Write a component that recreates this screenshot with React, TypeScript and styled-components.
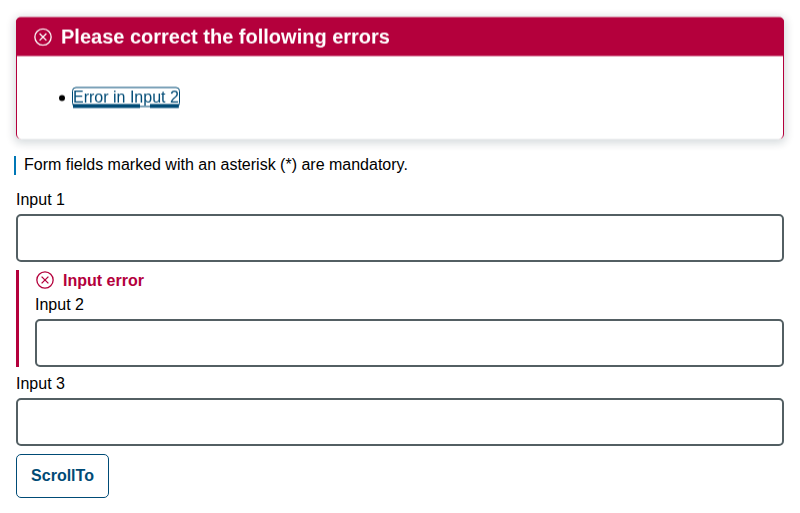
import React from 'react';
import styled, { createGlobalStyle, keyframes } from 'styled-components';

const GlobalStyle = createGlobalStyle`
  * { box-sizing: border-box; }
  body {
    margin: 0;
    background: #fff;
    color: #000;
    font: 16px/18px "Liberation Sans", Arial, sans-serif;
  }
`;

const Page = styled.main`
  display: flex;
  flex-direction: column;
  align-items: stretch;
  padding: 16px;
`;

const settle = keyframes`
  from { transform: translateY(0.45px); }
  to { transform: translateY(0.46px); }
`;

const Alert = styled.section`
  height: 122px;
  margin: 1px 0 -1px;
  border: 1px solid #b4003c;
  border-top: 0;
  border-bottom: 0;
  border-radius: 5px;
  background: #fff;
  box-shadow: 0 2px 8px 2px rgba(8, 35, 48, 0.16);
  will-change: transform;
  animation: ${settle} 10s linear infinite alternate;
`;

const AlertHeader = styled.header`
  display: flex;
  align-items: center;
  gap: 9px;
  height: 39px;
  margin: 0 -1px;
  padding: 1px 18px 0;
  border-radius: 5px 5px 0 0;
  background: #b4003c;
  color: #fff;
`;

const AlertTitle = styled.h2`
  margin: 0;
  font-size: 20px;
  line-height: 24px;
`;

const ErrorList = styled.ul`
  margin: 32px 0 0;
  padding: 0 0 0 42px;
  list-style: none;
`;

const ErrorItem = styled.li`
  display: flex;
  align-items: flex-start;
  gap: 8px;

  &::before {
    content: '';
    width: 6px;
    height: 6px;
    margin-top: 7px;
    border-radius: 50%;
    background: #000;
  }
`;

const ErrorLink = styled.a`
  height: 18px;
  padding-top: 1px;
  border-radius: 3px;
  outline: 1px solid #004b76;
  color: #004b76;
  text-decoration: underline;
  text-decoration-thickness: 4px;
  text-underline-offset: 1px;
`;

const MandatoryNote = styled.p`
  margin: 18px 0 0 -2px;
  padding: 0 0 1px 8px;
  border-left: 2px solid #0077b6;
`;

const Field = styled.div<{ $invalid?: boolean; $gap: number }>`
  margin-top: ${({ $gap }) => $gap}px;
  padding-left: ${({ $invalid }) => ($invalid ? 16 : 0)}px;
  border-left: ${({ $invalid }) => ($invalid ? '3px solid #b4003c' : '0')};
`;

const Label = styled.label`
  display: block;
  margin-bottom: 5px;
`;

const TextInput = styled.input`
  display: block;
  width: 100%;
  height: 48px;
  padding: 0 12px;
  border: 2px solid #535f63;
  border-radius: 5px;
  background: #fff;
  font: inherit;
`;

const ErrorMessage = styled.div`
  display: flex;
  align-items: center;
  gap: 9px;
  height: 20px;
  margin-bottom: 6px;
  padding-left: 1px;
  color: #b4003c;
  font-weight: bold;
  line-height: 20px;
`;

const Button = styled.button`
  align-self: flex-start;
  width: 93px;
  height: 44px;
  margin-top: 8px;
  padding: 0;
  border: 1px solid #004b76;
  border-radius: 5px;
  background: #fff;
  color: #004b76;
  font: bold 16px/18px "Liberation Sans", Arial, sans-serif;
`;

const Icon = styled.svg`
  flex: none;
  width: 18px;
  height: 18px;
  fill: none;
  stroke: currentColor;
  stroke-width: 1.3;
`;

const ErrorIcon = () => (
  <Icon viewBox="0 0 18 18" aria-hidden="true">
    <circle cx="9" cy="9" r="8.15" />
    <path d="M5.6 5.6l6.8 6.8M12.4 5.6l-6.8 6.8" />
  </Icon>
);

const MessageText = styled.span`
  padding-top: 2px;
`;

export default function App() {
  return (
    <>
      <GlobalStyle />
      <Page>
        <Alert>
          <AlertHeader>
            <ErrorIcon />
            <AlertTitle>Please correct the following errors</AlertTitle>
          </AlertHeader>
          <ErrorList>
            <ErrorItem><ErrorLink href="#input2">Error in Input 2</ErrorLink></ErrorItem>
          </ErrorList>
        </Alert>
        <MandatoryNote>Form fields marked with an asterisk (*) are mandatory.</MandatoryNote>
        <Field $gap={16}>
          <Label htmlFor="input1">Input 1</Label>
          <TextInput id="input1" />
        </Field>
        <Field $gap={8} $invalid>
          <ErrorMessage><ErrorIcon /><MessageText>Input error</MessageText></ErrorMessage>
          <Label htmlFor="input2">Input 2</Label>
          <TextInput id="input2" />
        </Field>
        <Field $gap={8}>
          <Label htmlFor="input3">Input 3</Label>
          <TextInput id="input3" />
        </Field>
        <Button>ScrollTo</Button>
      </Page>
    </>
  );
}
